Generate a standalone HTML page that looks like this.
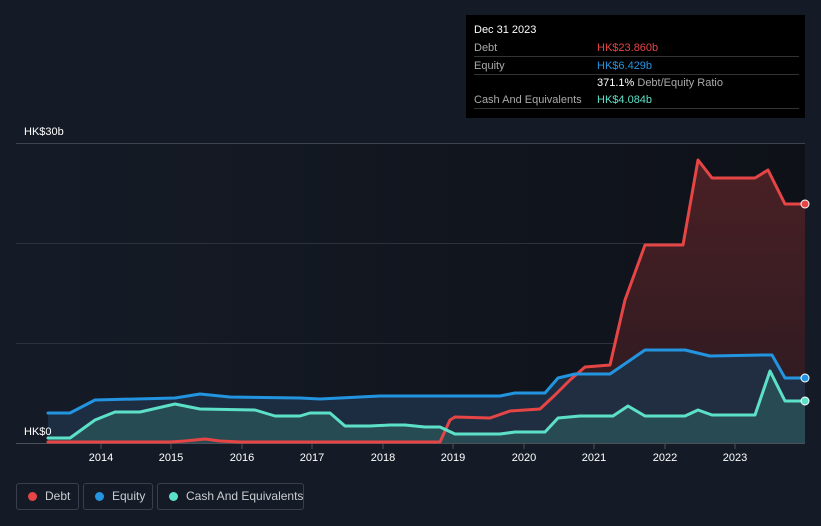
<!DOCTYPE html>
<html><head><style>
html,body{margin:0;width:821px;height:526px;overflow:hidden}
body{background:#151b26;font-family:"Liberation Sans",sans-serif;position:relative}
.tt{position:absolute;left:466px;top:15px;width:339px;height:103px;background:#000;color:#fff;font-size:11px}
.tt .r{position:absolute;left:8px;right:6px;border-bottom:1px solid #333;height:17px}
.tt span{position:absolute;top:3px;white-space:nowrap}
.lg{position:absolute;top:483px;height:27px;border:1px solid #3a404b;border-radius:3px;color:#c9ccd1;font-size:12px;line-height:25px;box-sizing:border-box;white-space:nowrap}
.lg i{position:absolute;left:11px;top:8px;width:9px;height:9px;border-radius:50%}
</style></head><body>
<svg width="821" height="526" style="position:absolute;left:0;top:0">
<defs>
<linearGradient id="bg" x1="0" x2="1"><stop offset="0" stop-color="#151b26"/><stop offset="1" stop-color="#0e1118"/></linearGradient>
<linearGradient id="dg" x1="0" y1="0" x2="0" y2="1"><stop offset="0" stop-color="#4a2025"/><stop offset="1" stop-color="#2a1a20"/></linearGradient>
</defs>
<rect x="48" y="143" width="757" height="300" fill="url(#bg)"/>
<g stroke="#2c313a" stroke-width="1"><line x1="16" y1="143.5" x2="805" y2="143.5" stroke="#3e434c"/><line x1="16" y1="243.5" x2="805" y2="243.5"/><line x1="16" y1="343.5" x2="805" y2="343.5"/></g>
<path d="M48,442 L170,442 185,441 205,439 220,441 240,442 440,442 450,420 455,417 490,418 510,411 540,409 555,395 570,380 585,367 610,365 625,300 645,245 683,245 698,160 712,178 755,178 768,170 785,204 805,204 L805,443 48,443Z" fill="url(#dg)"/>
<path d="M48,413 L70,413 95,400 175,398 200,394 230,397 300,398 320,399 340,398 380,396 500,396 515,393 545,393 558,378 575,374 610,374 645,350 685,350 710,356 765,355 772,355 785,378 805,378 L805,443 48,443Z" fill="#1f3148" opacity="0.85"/>
<path d="M48,438 L70,438 95,420 115,412 140,412 175,404 200,409 255,410 275,416 300,416 310,413 330,413 345,426 370,426 390,425 405,425 425,427 440,427 455,434 500,434 515,432 545,432 558,418 580,416 613,416 628,406 645,416 685,416 698,410 712,415 755,415 770,371 785,401 805,401 L805,443 48,443Z" fill="#2b5258" opacity="0.8"/>
<line x1="16" y1="443.5" x2="805" y2="443.5" stroke="#4a4f58"/>
<g fill="none" stroke-width="3" stroke-linejoin="round" stroke-linecap="round">
<path d="M48,442 L170,442 185,441 205,439 220,441 240,442 440,442 450,420 455,417 490,418 510,411 540,409 555,395 570,380 585,367 610,365 625,300 645,245 683,245 698,160 712,178 755,178 768,170 785,204 805,204" stroke="#e64545"/>
<path d="M48,413 L70,413 95,400 175,398 200,394 230,397 300,398 320,399 340,398 380,396 500,396 515,393 545,393 558,378 575,374 610,374 645,350 685,350 710,356 765,355 772,355 785,378 805,378" stroke="#2394df"/>
<path d="M48,438 L70,438 95,420 115,412 140,412 175,404 200,409 255,410 275,416 300,416 310,413 330,413 345,426 370,426 390,425 405,425 425,427 440,427 455,434 500,434 515,432 545,432 558,418 580,416 613,416 628,406 645,416 685,416 698,410 712,415 755,415 770,371 785,401 805,401" stroke="#5de0c8"/>
</g>
<circle cx="805" cy="204" r="4" fill="#e64545" stroke="#fff"/>
<circle cx="805" cy="378" r="4" fill="#2394df" stroke="#fff"/>
<circle cx="805" cy="401" r="4" fill="#5de0c8" stroke="#fff"/>
<g stroke="#4a4f58"><line x1="101" y1="444" x2="101" y2="449"/><line x1="171" y1="444" x2="171" y2="449"/><line x1="242" y1="444" x2="242" y2="449"/><line x1="312" y1="444" x2="312" y2="449"/><line x1="383" y1="444" x2="383" y2="449"/><line x1="453" y1="444" x2="453" y2="449"/><line x1="524" y1="444" x2="524" y2="449"/><line x1="594" y1="444" x2="594" y2="449"/><line x1="665" y1="444" x2="665" y2="449"/><line x1="735" y1="444" x2="735" y2="449"/></g>
<g fill="#fff" font-size="11" text-anchor="middle"><text x="101" y="461">2014</text><text x="171" y="461">2015</text><text x="242" y="461">2016</text><text x="312" y="461">2017</text><text x="383" y="461">2018</text><text x="453" y="461">2019</text><text x="524" y="461">2020</text><text x="594" y="461">2021</text><text x="665" y="461">2022</text><text x="735" y="461">2023</text></g>
<text x="24" y="135" fill="#fff" font-size="11">HK$30b</text>
<text x="24" y="435" fill="#fff" font-size="11">HK$0</text>
</svg>
<div class="tt">
<div style="position:absolute;left:8px;top:9px;font-size:11px">Dec 31 2023</div>
<div class="r" style="top:24px"><span style="color:#aaa">Debt</span><span style="left:123px;color:#e64545">HK$23.860b</span></div>
<div class="r" style="top:42px"><span style="color:#aaa">Equity</span><span style="left:123px;color:#2394df">HK$6.429b</span></div>
<div class="r" style="top:59px;border:0"><span style="left:123px">371.1% <span style="position:static;color:#aaa">Debt/Equity Ratio</span></span></div>
<div class="r" style="top:76px"><span style="color:#aaa">Cash And Equivalents</span><span style="left:123px;color:#5de0c8">HK$4.084b</span></div>
</div>
<div class="lg" style="left:16px;width:63px"><i style="background:#e64545"></i><span style="position:absolute;left:28px">Debt</span></div>
<div class="lg" style="left:83px;width:70px"><i style="background:#2394df"></i><span style="position:absolute;left:28px">Equity</span></div>
<div class="lg" style="left:157px;width:147px"><i style="background:#5de0c8"></i><span style="position:absolute;left:28px">Cash And Equivalents</span></div>
</body></html>
